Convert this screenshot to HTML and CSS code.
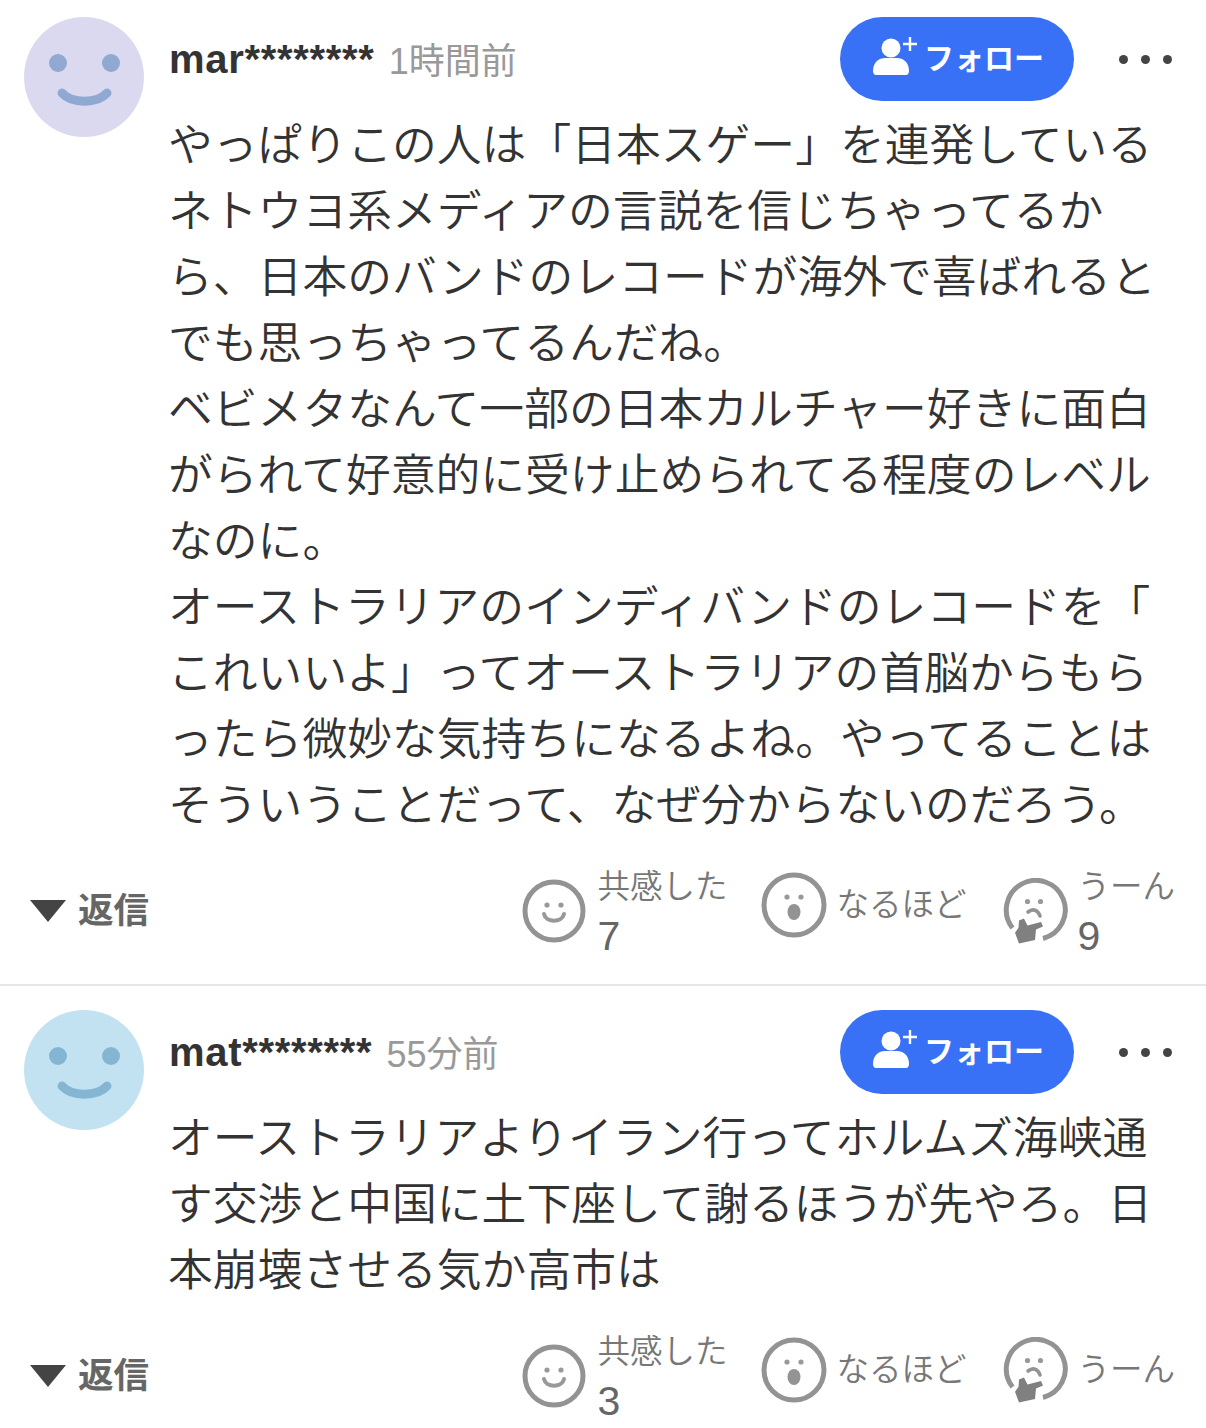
FILE: index.html
```html
<!DOCTYPE html>
<html lang="ja">
<head>
    <meta charset="UTF-8">
    <meta name="viewport" content="width=device-width, initial-scale=1.0">
    <title>コメント</title>
    <link rel="stylesheet" href="styles.css">
</head>
<body>
    <svg class="defs" aria-hidden="true">
        <symbol id="icon-follow" viewBox="0 0 46 46">
            <circle cx="19" cy="15" r="9.5" fill="#fff"/>
            <path d="M1 38c0-9 6-13 12-13h12c6 0 12 4 12 13 0 2-1 4-3 4H4c-2 0-3-2-3-4z" fill="#fff"/>
            <path d="M38 4v14M31 11h14" stroke="#fff" stroke-width="2.4" fill="none"/>
        </symbol>
        <symbol id="icon-smile" viewBox="0 0 64 64">
            <circle cx="32" cy="32" r="29" fill="none" stroke="#939393" stroke-width="5"/>
            <circle cx="25" cy="26" r="2.6" fill="#999"/>
            <circle cx="39" cy="26" r="2.6" fill="#999"/>
            <path d="M22 35c2 9 18 9 20 0" fill="none" stroke="#999" stroke-width="4" stroke-linecap="round"/>
        </symbol>
        <symbol id="icon-wow" viewBox="0 0 66 66">
            <circle cx="33" cy="33" r="30" fill="none" stroke="#939393" stroke-width="5"/>
            <circle cx="26" cy="25" r="2.6" fill="#999"/>
            <circle cx="40" cy="25" r="2.6" fill="#999"/>
            <ellipse cx="33" cy="40" rx="6.5" ry="8" fill="#939393"/>
        </symbol>
        <symbol id="icon-hmm" viewBox="0 0 66 66">
            <path d="M10.5 50A29.5 29.5 0 1 1 41 60.5" fill="none" stroke="#939393" stroke-width="5"/>
            <circle cx="25.5" cy="23.5" r="2.6" fill="#999"/>
            <circle cx="38.5" cy="23.5" r="2.6" fill="#999"/>
            <path d="M26 34c5-4 10-2 12 4" fill="none" stroke="#939393" stroke-width="3.6" stroke-linecap="round"/>
            <path d="M13 54.7L17 65.5 33 62 34 51.5 41 48.5 39 44 25.5 47.5 22 40.5 17 42.5 16.5 49.7z" fill="#808080"/>
        </symbol>
    </svg>

    <!-- コメント一覧 -->
    <div class="comment">
        <div class="comment-top">
            <svg class="avatar avatar-purple" viewBox="0 0 120 120">
                <circle cx="60" cy="60" r="60" class="avatar-bg"/>
                <circle cx="34" cy="46" r="9" class="avatar-fg"/>
                <circle cx="87" cy="46" r="9" class="avatar-fg"/>
                <path d="M38 76c10 11 35 11 45 0" class="avatar-mouth"/>
            </svg>
            <div class="comment-main">
                <div class="comment-head">
                    <span class="user-name">mar********</span>
                    <span class="post-time">1時間前</span>
                    <button class="follow-btn"><svg class="follow-icon"><use href="#icon-follow"/></svg><span class="follow-label">フォロー</span></button>
                    <div class="more"><i></i><i></i><i></i></div>
                </div>
                <p class="comment-text">やっぱりこの人は「日本スゲー」を連発している<br>ネトウヨ系メディアの言説を信じちゃってるか<br>ら、日本のバンドのレコードが海外で喜ばれると<br>でも思っちゃってるんだね。<br>ベビメタなんて一部の日本カルチャー好きに面白<br>がられて好意的に受け止められてる程度のレベル<br>なのに。<br>オーストラリアのインディバンドのレコードを「<br>これいいよ」ってオーストラリアの首脳からもら<br>ったら微妙な気持ちになるよね。やってることは<br>そういうことだって、なぜ分からないのだろう。</p>
            </div>
        </div>
        <div class="comment-foot">
            <div class="reply"><span class="reply-arrow"></span><span class="reply-label">返信</span></div>
            <div class="reactions">
                <div class="reaction">
                    <svg class="icon-64"><use href="#icon-smile"/></svg>
                    <div class="reaction-text"><span class="reaction-label">共感した</span><span class="reaction-count">7</span></div>
                </div>
                <div class="reaction">
                    <svg class="icon-66"><use href="#icon-wow"/></svg>
                    <div class="reaction-text"><span class="reaction-label">なるほど</span></div>
                </div>
                <div class="reaction">
                    <svg class="icon-66"><use href="#icon-hmm"/></svg>
                    <div class="reaction-text"><span class="reaction-label">うーん</span><span class="reaction-count">9</span></div>
                </div>
            </div>
        </div>
    </div>

    <div class="comment">
        <div class="comment-top">
            <svg class="avatar avatar-blue" viewBox="0 0 120 120">
                <circle cx="60" cy="60" r="60" class="avatar-bg"/>
                <circle cx="34" cy="46" r="9" class="avatar-fg"/>
                <circle cx="87" cy="46" r="9" class="avatar-fg"/>
                <path d="M38 76c10 11 35 11 45 0" class="avatar-mouth"/>
            </svg>
            <div class="comment-main">
                <div class="comment-head">
                    <span class="user-name">mat********</span>
                    <span class="post-time">55分前</span>
                    <button class="follow-btn"><svg class="follow-icon"><use href="#icon-follow"/></svg><span class="follow-label">フォロー</span></button>
                    <div class="more"><i></i><i></i><i></i></div>
                </div>
                <p class="comment-text">オーストラリアよりイラン行ってホルムズ海峡通<br>す交渉と中国に土下座して謝るほうが先やろ。日<br>本崩壊させる気か高市は</p>
            </div>
        </div>
        <div class="comment-foot">
            <div class="reply"><span class="reply-arrow"></span><span class="reply-label">返信</span></div>
            <div class="reactions">
                <div class="reaction">
                    <svg class="icon-64"><use href="#icon-smile"/></svg>
                    <div class="reaction-text"><span class="reaction-label">共感した</span><span class="reaction-count">3</span></div>
                </div>
                <div class="reaction">
                    <svg class="icon-66"><use href="#icon-wow"/></svg>
                    <div class="reaction-text"><span class="reaction-label">なるほど</span></div>
                </div>
                <div class="reaction">
                    <svg class="icon-66"><use href="#icon-hmm"/></svg>
                    <div class="reaction-text"><span class="reaction-label">うーん</span></div>
                </div>
            </div>
        </div>
    </div>
</body>
</html>
```
FILE: styles.css
```css
body {
    margin: 0;
    background-color: #fff;
    color: #333;
    font-family: "Liberation Sans", "Noto Sans CJK JP", sans-serif;
}

.defs {
    display: none;
}

.comment {
    padding: 24px 0 32px;
    border-bottom: 2px solid #e6e6e6;
}
.comment:first-of-type {
    padding-top: 17px;
}
.comment:last-child {
    border-bottom: none;
}

.comment-top {
    display: flex;
    padding-left: 24px;
    gap: 26px;
}

.avatar {
    flex: none;
    width: 120px;
    height: 120px;
}
.avatar-purple .avatar-bg { fill: #dbd9f0; }
.avatar-purple .avatar-fg { fill: #8fa9d3; }
.avatar-purple .avatar-mouth { stroke: #8fa9d3; }
.avatar-blue .avatar-bg { fill: #c3e2f1; }
.avatar-blue .avatar-fg { fill: #84b6d3; }
.avatar-blue .avatar-mouth { stroke: #84b6d3; }
.avatar-mouth {
    fill: none;
    stroke-width: 9;
    stroke-linecap: round;
}

.comment-main {
    flex: 1;
    min-width: 0;
}

.comment-head {
    display: flex;
    align-items: center;
    height: 84px;
    padding-right: 34px;
}

.user-name {
    margin-left: -1px;
    font-size: 40px;
    font-weight: bold;
    letter-spacing: 0.7px;
}

.post-time {
    margin: -3px 0 0 14px;
    font-size: 36px;
    color: #999;
}

.follow-btn {
    display: flex;
    align-items: center;
    margin-left: auto;
    width: 234px;
    height: 84px;
    padding: 0 0 0 32px;
    gap: 6px;
    border: none;
    border-radius: 42px;
    background-color: #3871f5;
    color: #fff;
    font-family: inherit;
    font-size: 30px;
    font-weight: bold;
    box-sizing: border-box;
}

.follow-label {
    margin-top: -7px;
}

.follow-icon {
    width: 46px;
    height: 46px;
    margin-top: -6px;
}

.more {
    display: flex;
    justify-content: space-between;
    width: 53px;
    margin-left: 45px;
}
.more i {
    width: 9px;
    height: 9px;
    border-radius: 50%;
    background-color: #444;
}

.comment-text {
    margin: 11px 0 0 -2px;
    font-size: 44.8px;
    font-weight: 350;
    line-height: 66px;
    white-space: nowrap;
}

.comment-foot {
    display: flex;
    align-items: center;
    justify-content: space-between;
    margin-top: 32px;
    padding: 0 29px 0 30px;
}

.reply {
    display: flex;
    align-items: center;
    gap: 12px;
    font-size: 35.5px;
    font-weight: bold;
    color: #666;
}
.reply-label {
    margin-top: -8px;
}
.reply-arrow {
    width: 0;
    height: 0;
    border-left: 18px solid transparent;
    border-right: 18px solid transparent;
    border-top: 22px solid #444;
}

.reactions {
    display: flex;
    align-items: flex-start;
    gap: 34px;
}

.reaction {
    display: flex;
    align-items: center;
    gap: 11px;
    min-height: 70px;
}

.icon-64 {
    width: 64px;
    height: 64px;
}
.icon-66 {
    width: 66px;
    height: 66px;
}
.icon-66 + .reaction-text {
    margin: 0 2px 0 -2px;
}

.reaction-text {
    display: flex;
    flex-direction: column;
}

.reaction-label {
    font-size: 32.5px;
    font-weight: 350;
    line-height: 34px;
    color: #777;
}

.reaction-count {
    margin-top: 13px;
    margin-bottom: -3px;
    font-size: 41px;
    line-height: 38px;
    color: #666;
}
```
